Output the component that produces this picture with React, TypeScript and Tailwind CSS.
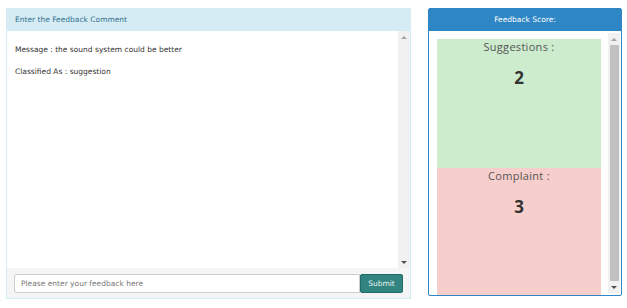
import React from 'react';

const font = { fontFamily: '"DejaVu Sans", Verdana, sans-serif' };

function ScrollArrows({ thumb }: { thumb?: boolean }) {
  return (
    <div className="flex w-[12px] shrink-0 flex-col items-center bg-[#f1f1f1]">
      <div className="flex h-[12px] w-full items-center justify-center">
        <div className="h-0 w-0 border-x-[3px] border-b-[3px] border-x-transparent border-b-[#a3a3a3]" />
      </div>
      {thumb ? (
        <div className="w-[9px] flex-1 bg-[#c1c1c1]" />
      ) : (
        <div className="flex-1" />
      )}
      <div className="flex h-[12px] w-full items-center justify-center">
        <div className="h-0 w-0 border-x-[3px] border-t-[3px] border-x-transparent border-t-[#505050]" />
      </div>
    </div>
  );
}

export default function App() {
  return (
    <div className="flex h-[308px] w-[627px] gap-[17px] bg-white pl-[6px] pt-[8px]" style={font}>
      <div className="flex h-[291px] w-[405px] flex-col border border-[#d3ecf5]">
        <div className="flex h-[22px] items-center bg-[#d5ecf4] px-[8px] text-[7.5px] text-[#31708f]">
          Enter the Feedback Comment
        </div>
        <div className="flex flex-1">
          <div className="flex-1 px-[8px] pt-[13px] text-[7.5px] text-[#333]">
            <p>Message : the sound system could be better</p>
            <p className="mt-[11px]">Classified As : suggestion</p>
          </div>
          <ScrollArrows />
        </div>
        <div className="flex h-[30px] items-center bg-[#f5f5f5] px-[7px] pt-[1px]">
          <div className="flex h-[19px] flex-1 items-center rounded-l-[3px] border border-[#ccc] bg-white px-[6px] text-[7.5px] text-[#777]">
            Please enter your feedback here
          </div>
          <button className="h-[19px] w-[43px] rounded-[2px] border border-[#1f6b66] bg-[#31847f] text-[7.5px] text-[#e8f4f2]">
            Submit
          </button>
        </div>
      </div>

      <div className="flex h-[288px] w-[194px] flex-col rounded-[2px] border border-[#2f86c4]">
        <div className="flex h-[22px] items-center justify-center bg-[#2f86c4] text-[7.5px] text-white">
          Feedback Score:
        </div>
        <div className="flex flex-1 gap-[7px] overflow-hidden pl-[8px] pr-[1px] pt-[8px]">
          <div className="flex w-[164px] flex-col" style={{ fontFamily: '"Open Sans", sans-serif' }}>
            <div className="flex h-[129px] flex-col items-center bg-[#cdecce]">
              <div className="text-[11px] tracking-[0.3px] text-[#555]">Suggestions :</div>
              <div className="mt-[9px] text-[17px] font-bold text-[#333]">2</div>
            </div>
            <div className="flex flex-1 flex-col items-center bg-[#f6cecb]">
              <div className="text-[11px] tracking-[0.3px] text-[#555]">Complaint :</div>
              <div className="mt-[9px] text-[17px] font-bold text-[#333]">3</div>
            </div>
          </div>
          <div className="-mt-[6px] mb-[2px] flex">
            <ScrollArrows thumb />
          </div>
        </div>
      </div>
    </div>
  );
}
